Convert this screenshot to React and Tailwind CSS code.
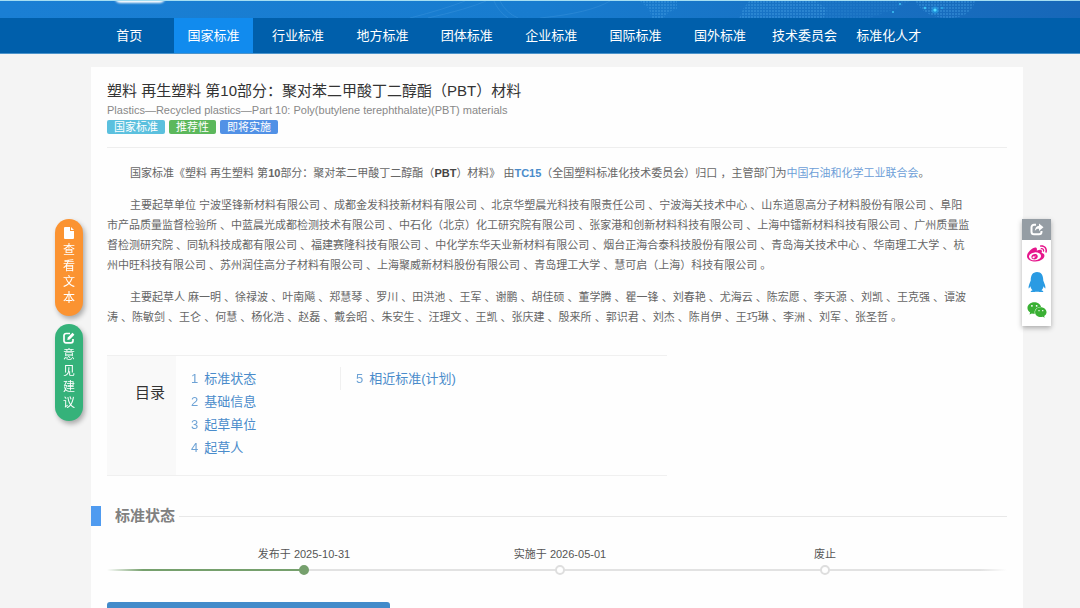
import React from 'react';
import { FaQq, FaWeibo, FaWeixin } from 'react-icons/fa';

const NAV = ['首页', '国家标准', '行业标准', '地方标准', '团体标准', '企业标准', '国际标准', '国外标准', '技术委员会', '标准化人才'];

const TOC = [
  ['标准状态', '基础信息', '起草单位', '起草人'],
  ['相近标准(计划)'],
];

const UNITS = `主要起草单位 宁波坚锋新材料有限公司 、成都金发科技新材料有限公司 、北京华塑晨光科技有限责任公司 、宁波海关技术中心 、山东道恩高分子材料股份有限公司 、阜阳
市产品质量监督检验所 、中蓝晨光成都检测技术有限公司 、中石化（北京）化工研究院有限公司 、张家港和创新材料科技有限公司 、上海中镭新材料科技有限公司 、广州质量监
督检测研究院 、同轨科技成都有限公司 、福建赛隆科技有限公司 、中化学东华天业新材料有限公司 、烟台正海合泰科技股份有限公司 、青岛海关技术中心 、华南理工大学 、杭
州中旺科技有限公司 、苏州润佳高分子材料有限公司 、上海聚威新材料股份有限公司 、青岛理工大学 、慧可启（上海）科技有限公司 。`;

const DRAFTERS = `主要起草人 麻一明 、徐禄波 、叶南飚 、郑慧琴 、罗川 、田洪池 、王军 、谢鹏 、胡佳硕 、董学腾 、瞿一锋 、刘春艳 、尤海云 、陈宏愿 、李天源 、刘凯 、王克强 、谭波
涛 、陈敏剑 、王仑 、何慧 、杨化浩 、赵磊 、戴会昭 、朱安生 、汪理文 、王凯 、张庆建 、殷来所 、郭识君 、刘杰 、陈肖伊 、王巧琳 、李洲 、刘军 、张圣哲 。`;

function Banner() {
  return (
    <div className="relative h-[18px] overflow-hidden border-t border-[#a5def2] bg-linear-to-r from-[#1a7fd4] via-[#187ccf] to-[#1767b8]">
      <div className="absolute -top-2 left-[115px] h-[10px] w-[50px] rounded-md bg-white blur-[1px]" />
      <svg className="absolute top-0 right-0 h-[18px] w-[680px]" viewBox="0 0 680 18" fill="none" aria-hidden="true">
        <defs>
          <pattern id="grid" width="3" height="3" patternUnits="userSpaceOnUse">
            <rect width="2" height="2" fill="#4aa5e6" opacity=".35" />
          </pattern>
        </defs>
        <path d="M10 17Q45 8 65 0M28 17Q68 8 86 0M94 0Q98 10 108 17M100 0Q106 12 118 17M140 17Q190 12 210 0" stroke="#4b9fe0" strokeOpacity=".3" />
        <path d="M240 0h37v8l-8 3-6 6h-11l-3-9zM349 0h66l12 8-4 10h-84l4-10z" fill="url(#grid)" />
        <path d="M415 0h95l-14 8-30 10h-43z" fill="url(#grid)" opacity=".4" />
        <path d="M515 0h60q-4 17-27 17T515 0z" fill="url(#grid)" />
        <circle cx="535" cy="9" r="3.5" fill="#27a9f0" opacity=".5" />
        <circle cx="535" cy="9" r="1.6" fill="#4fdcff" />
        <circle cx="525" cy="7" r="1.2" fill="#3cc3f5" />
        <circle cx="542" cy="7" r="1" fill="#2bb0ee" />
        <circle cx="500" cy="3" r="1" fill="#3cc3f5" />
        <circle cx="493" cy="11" r="1" fill="#3cc3f5" />
      </svg>
    </div>
  );
}

function FileIcon() {
  return (
    <svg className="h-3 w-[10px]" viewBox="0 0 10 12" fill="currentColor" aria-hidden="true">
      <path d="M1 0h5v4h4v7a1 1 0 0 1-1 1H1a1 1 0 0 1-1-1V1a1 1 0 0 1 1-1zM7 0l3 3H7z" />
    </svg>
  );
}

function EditIcon() {
  return (
    <svg className="h-3 w-3" viewBox="0 0 12 12" fill="none" stroke="currentColor" strokeWidth="1.7" aria-hidden="true">
      <path d="M7 1.500H3A2 2 0 0 0 1 3.500v5A2 2 0 0 0 3 10.800h5a2 2 0 0 0 2-2V7" />
      <path d="M4.300 7.900l.5-2.400L9.500.8l1.900 1.900-4.700 4.700z" fill="currentColor" stroke="none" />
    </svg>
  );
}

function ShareIcon() {
  return (
    <svg className="h-[13px] w-[14px]" viewBox="0 0 14 13" fill="none" stroke="currentColor" strokeWidth="2" aria-hidden="true">
      <path d="M6 1.800H4a2.500 2.500 0 0 0-2.500 2.500v4.400A2.500 2.500 0 0 0 4 11.200h5a2.500 2.500 0 0 0 2.500-2.500V8" />
      <path d="M9 .5L13.500 4.200 9 8V5.800C7 5.700 6 6.300 4.800 8 5 4.800 6.500 3 9 2.700z" fill="currentColor" stroke="none" />
    </svg>
  );
}

function SideLink({ icon, text, color }) {
  return (
    <a href="#" aria-label={text} className={`flex w-7 flex-col items-center rounded-full pt-2 pb-[10px] text-[12px] leading-4 text-white shadow-[2px_3px_5px_rgba(0,0,0,0.3)] ${color}`}>
      <span className="mb-[3px]">{icon}</span>
      {[...text].map((c) => <span key={c}>{c}</span>)}
    </a>
  );
}

function Step({ label, done }) {
  return (
    <li className="flex flex-col items-center">
      <span className="leading-5">{label}</span>
      <span className={`mt-px size-[10px] rounded-full border-2 ${done ? 'border-[#76a06d] bg-[#76a06d]' : 'border-[#dedede] bg-white'}`} />
    </li>
  );
}

export default function App() {
  return (
    <div className="min-h-screen bg-[#f4f4f4] font-['Liberation_Sans','Noto_Sans_CJK_SC',sans-serif] text-[#333]">
      <header>
        <Banner />
        <nav className="grid grid-cols-10 border-b border-[#4c94cb] bg-[#005fab] pr-[149px] pl-[87px] text-[13px] leading-[35px] text-white">
          {NAV.map((item, i) => (
            <a key={item} href="#" className={`mx-[3px] text-center whitespace-nowrap ${i === 1 ? 'bg-[#118bee]' : ''}`}>
              {item}
            </a>
          ))}
        </nav>
      </header>

      <main className="mt-[13px] mr-[57px] ml-[91px] bg-[#fefefe] px-4 pt-[14px]">
        <h1 className="text-[15px] leading-5">塑料 再生塑料 第10部分：聚对苯二甲酸丁二醇酯（PBT）材料</h1>
        <p className="text-[11px] leading-[18px] text-[#888]">
          Plastics—Recycled plastics—Part 10: Poly(butylene terephthalate)(PBT) materials
        </p>
        <div className="mt-px flex gap-1 border-b border-[#eee] pb-[13px] text-[11px] leading-[14px] text-white">
          <span className="rounded-xs bg-[#5bc0de] px-[7px]">国家标准</span>
          <span className="rounded-xs bg-[#5cb85c] px-[7px]">推荐性</span>
          <span className="rounded-xs bg-[#5191e6] px-[7px]">即将实施</span>
        </div>

        {/* Description */}
        <div className="mt-[15px] space-y-3 text-[11px] leading-5 text-[#666]">
          <p className="indent-[23px]">
            国家标准《塑料 再生塑料 第<b>10</b>部分：聚对苯二甲酸丁二醇酯（<b className="text-[#444]">PBT</b>）材料》 由
            <a href="#" className="font-bold text-[#4a8ccb]">TC15</a>
            （全国塑料标准化技术委员会）归口 ，主管部门为
            <a href="#" className="text-[#6d9fd8]">中国石油和化学工业联合会</a>。
          </p>
          <p className="indent-[23px] whitespace-pre-line">{UNITS}</p>
          <p className="indent-[23px] whitespace-pre-line">{DRAFTERS}</p>
        </div>

        {/* Table of contents */}
        <section className="mt-7 flex min-h-[121px] max-w-[560px] border-y border-[#f0f0f0]">
          <h2 className="w-[69px] bg-[#f9f9f9] pt-[27px] pl-7 text-[15px] leading-5">目录</h2>
          <div className="flex flex-1 pt-[11px] text-[13px] leading-[23px] text-[#4a8ccb]">
            {TOC.map((column, c) => (
              <ol key={c} className={c === 0 ? 'w-[164px] pl-[15px]' : 'h-[23px] border-l border-[#f0f0f0] pl-[15px]'}>
                {column.map((title, i) => (
                  <li key={title}>
                    <a href="#" className="flex gap-[6px]">
                      <span className="opacity-80">{c * 4 + i + 1}</span>
                      {title}
                    </a>
                  </li>
                ))}
              </ol>
            ))}
          </div>
        </section>

        {/* Status */}
        <section className="mt-[30px]">
          <div className="-ml-4 flex items-center">
            <span className="h-5 w-[10px] bg-[#4f9bf0]" />
            <h2 className="pr-1 pl-[14px] text-[15px] leading-5 font-bold text-[#808080]">标准状态</h2>
            <span className="h-px flex-1 bg-[#e8e8e8]" />
          </div>
          <div className="relative mt-[18px]">
            <div className="absolute inset-x-0 bottom-1 h-[2px] bg-[linear-gradient(to_right,transparent,#76a06d_4%,#76a06d_22%,#e2e2e2_22%,#e2e2e2_97%,transparent)]" />
            <ol className="relative grid grid-cols-[69fr_256fr_256fr_274fr_45fr] text-[11px] text-[#555]">
              <li aria-hidden="true" />
              <Step label="发布于 2025-10-31" done />
              <Step label="实施于 2026-05-01" />
              <Step label="废止" />
            </ol>
          </div>
          <button type="button" aria-label="标准全文" className="mt-[27px] block h-9 w-[283px] rounded-t-[3px] bg-[#428bca]" />
        </section>
      </main>

      <aside className="fixed top-[219px] left-[55px] space-y-2">
        <SideLink icon={<FileIcon />} text="查看文本" color="bg-[#fb9331]" />
        <SideLink icon={<EditIcon />} text="意见建议" color="bg-[#35b27a]" />
      </aside>

      <aside className="fixed top-[219px] right-[29px] flex w-[29px] flex-col items-center bg-white pb-[2px] shadow-[0_2px_5px_rgba(0,0,0,0.3)]">
        <button type="button" aria-label="分享" className="flex h-[21px] w-full items-center justify-center bg-[#959da4] text-white">
          <ShareIcon />
        </button>
        <a href="#" aria-label="微博" className="flex h-7 items-center text-[#e6168c]"><FaWeibo size={20} /></a>
        <a href="#" aria-label="QQ" className="flex h-7 items-center text-[#2a9be3]"><FaQq size={20} /></a>
        <a href="#" aria-label="微信" className="flex h-7 items-center text-[#3ab034]"><FaWeixin size={20} /></a>
      </aside>
    </div>
  );
}
